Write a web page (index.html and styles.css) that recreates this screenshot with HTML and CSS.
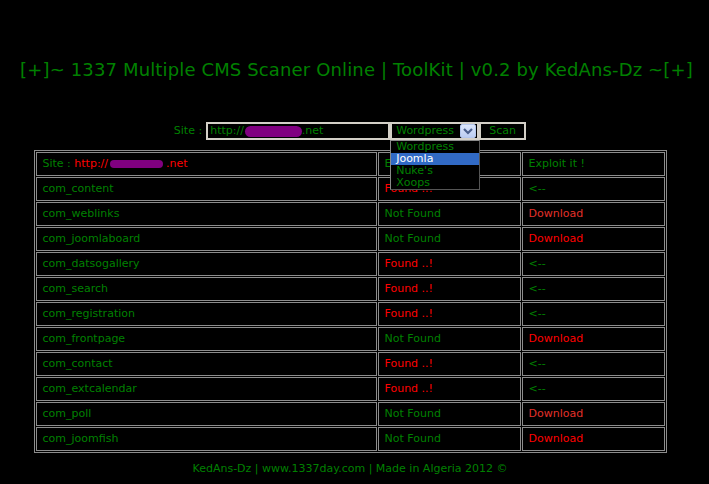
FILE: index.html
```html
<!DOCTYPE html>
<html>
<head>
<meta charset="utf-8">
<title>1337 Multiple CMS Scaner Online</title>
<link rel="stylesheet" href="styles.css">
</head>
<body>
<h1 class="title">[+]~ 1337 Multiple CMS Scaner Online | ToolKit | v0.2 by KedAns-Dz ~[+]</h1>
<div class="page">
  <form class="scan">
    <span class="label">Site :</span>
    <div class="input">http://<span class="blot"></span>.net</div>
    <div class="select">
      <span class="sel-text">Wordpress</span>
      <span class="arrow"><svg width="14" height="12" viewBox="0 0 14 12"><path d="M3 4 L7 8 L11 4" fill="none" stroke="#4a5f8c" stroke-width="2.2"/></svg></span>
      <ul class="options">
        <li>Wordpress</li>
        <li class="active">Joomla</li>
        <li>Nuke's</li>
        <li>Xoops</li>
      </ul>
    </div>
    <div class="btn">Scan</div>
  </form>
  <table class="results">
    <tr><td class="c1">Site : <span class="red">http://<span class="blot small"></span>.net</span></td><td class="c2">Etat</td><td class="c3">Exploit it !</td></tr>
    <tr><td class="c1">com_content</td><td class="c2 red">Found ..!</td><td class="c3">&lt;--</td></tr>
    <tr><td class="c1">com_weblinks</td><td class="c2">Not Found</td><td class="c3 dim">Download</td></tr>
    <tr><td class="c1">com_joomlaboard</td><td class="c2">Not Found</td><td class="c3 red">Download</td></tr>
    <tr><td class="c1">com_datsogallery</td><td class="c2 red">Found ..!</td><td class="c3">&lt;--</td></tr>
    <tr><td class="c1">com_search</td><td class="c2 red">Found ..!</td><td class="c3">&lt;--</td></tr>
    <tr><td class="c1">com_registration</td><td class="c2 red">Found ..!</td><td class="c3">&lt;--</td></tr>
    <tr><td class="c1">com_frontpage</td><td class="c2">Not Found</td><td class="c3 red">Download</td></tr>
    <tr><td class="c1">com_contact</td><td class="c2 red">Found ..!</td><td class="c3">&lt;--</td></tr>
    <tr><td class="c1">com_extcalendar</td><td class="c2 red">Found ..!</td><td class="c3">&lt;--</td></tr>
    <tr><td class="c1">com_poll</td><td class="c2">Not Found</td><td class="c3 dim">Download</td></tr>
    <tr><td class="c1">com_joomfish</td><td class="c2">Not Found</td><td class="c3 red">Download</td></tr>
  </table>
  <p class="footer">KedAns-Dz | www.1337day.com | Made in Algeria 2012 ©</p>
</div>
</body>
</html>
```
FILE: styles.css
```css
html, body {
  margin: 0;
  padding: 0;
  background: #000;
}
body {
  font-family: "DejaVu Sans", Verdana, sans-serif;
  font-size: 11px;
  color: #008000;
}
.title {
  margin: 0;
  padding: 60px 0 0 4px;
  height: 20px;
  line-height: 20px;
  font-size: 18px;
  letter-spacing: 0.14px;
  font-weight: normal;
  text-align: center;
  color: #008000;
  white-space: nowrap;
}
.page {
  width: 700px;
}
.scan {
  margin: 42px 0 0;
  display: flex;
  justify-content: center;
  align-items: center;
  height: 18px;
}
.label {
  margin-right: 4px;
  line-height: 18px;
}
.input {
  box-sizing: border-box;
  width: 184px;
  height: 18px;
  border: 2px solid #d4d0c8;
  padding: 0 2px;
  line-height: 14px;
  display: flex;
  align-items: center;
  white-space: nowrap;
}
.blot {
  display: inline-block;
  width: 57px;
  height: 11px;
  border-radius: 6px;
  background: #800080;
  margin-left: 1px;
}
.blot.small {
  width: 53px;
  height: 8px;
  border-radius: 4px;
  margin: 0 3px 0 2px;
  vertical-align: -1px;
}
.select {
  position: relative;
  box-sizing: border-box;
  width: 89px;
  height: 18px;
  border: 2px solid #d4d0c8;
  display: flex;
  align-items: center;
  padding-left: 4px;
  padding-right: 1px;
}
.sel-text {
  flex: 1;
  line-height: 14px;
}
.arrow {
  box-sizing: border-box;
  width: 16px;
  height: 14px;
  border: 1px solid #b4c6ec;
  border-radius: 2px;
  background: linear-gradient(#dce6fb, #bccdf2);
  display: flex;
  align-items: center;
  justify-content: center;
}
.arrow svg {
  display: block;
}
.options {
  position: absolute;
  left: -2px;
  top: 16px;
  width: 88px;
  margin: 0;
  padding: 0;
  list-style: none;
  background: #000;
  border: 1px solid #8a8a8a;
  border-right-color: #555;
  border-bottom-color: #555;
  z-index: 2;
}
.options li {
  height: 12px;
  line-height: 12px;
  padding-left: 5px;
}
.options li.active {
  background: #316ac5;
  color: #fff;
}
.btn {
  box-sizing: border-box;
  width: 47px;
  height: 18px;
  border: 2px solid #d4d0c8;
  text-align: center;
  line-height: 14px;
}
.results {
  margin: 10px auto 0;
  border: 1px solid #8c8c8c;
  border-spacing: 1px;
  border-collapse: separate;
}
.results td {
  box-sizing: border-box;
  border: 1px solid #8c8c8c;
  height: 24px;
  padding: 0 6px;
  line-height: 22px;
  white-space: nowrap;
  color: #008000;
}
.results td.c1 { width: 341px; }
.results td.c2 { width: 143px; }
.results td.c3 { width: 143px; }
.results td.red, .red { color: #ff0000; }
.results td.dim { color: #e0302a; }
.footer {
  margin: 9px 0 0;
  line-height: 14px;
  text-align: center;
}
```
